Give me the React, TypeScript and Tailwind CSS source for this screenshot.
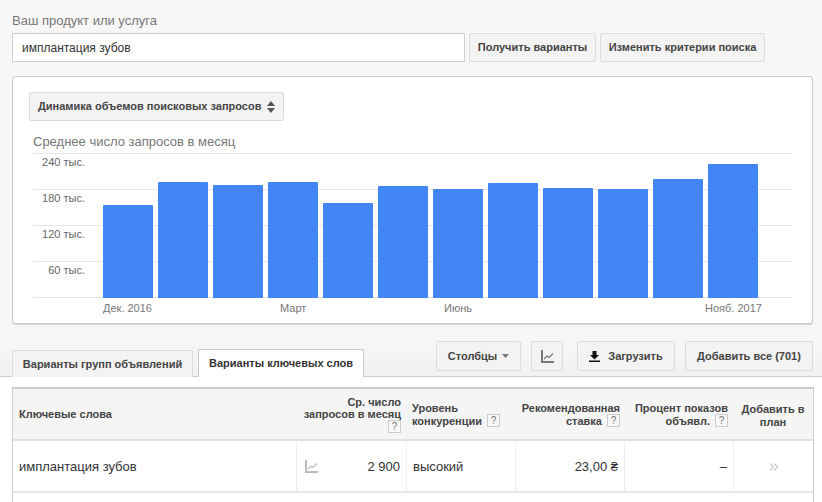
import { ChevronsRight } from "lucide-react";

const bars = [93, 116, 113, 116, 95, 112, 109, 115, 110, 109, 119, 134];

const yTicks = ["240 тыс.", "180 тыс.", "120 тыс.", "60 тыс."];

const font = { fontFamily: '"Liberation Sans", Arial, sans-serif' };

const Help = () => (
  <span className="inline-flex h-[13px] w-[13px] items-center justify-center border border-[#ccc] bg-[#f8f8f8] text-[10px] font-normal leading-none text-[#777]">
    ?
  </span>
);

const ChartIcon = ({ color = "#777" }: { color?: string }) => (
  <svg width="13" height="13" viewBox="0 0 13 13" fill="none">
    <path d="M1 0v12h12" stroke={color} strokeWidth="2" />
    <path d="M3 9l3-3 2 1.500 4-4" stroke={color} strokeWidth="1.200" />
  </svg>
);

const Button = ({ className, children }: { className: string; children: React.ReactNode }) => (
  <div
    className={`flex items-center justify-center rounded-[2px] border border-[#dcdcdc] bg-[#f3f3f3] text-[11px] font-bold text-[#444] ${className}`}
  >
    {children}
  </div>
);

const App = () => {
  return (
    <div className="h-[502px] w-[822px] overflow-hidden bg-[#f7f7f7]" style={font}>
      {/* Search */}
      <div className="px-3 pt-[13px]">
        <div className="h-5 text-[13px] leading-[15px] text-[#777]">Ваш продукт или услуга</div>
        <div className="flex h-[29px] gap-1">
          <div className="flex w-[453px] items-center border border-[#cfcfcf] bg-white pl-[9px] text-[12px] text-[#333]">
            имплантация зубов
          </div>
          <Button className="w-[127px]">Получить варианты</Button>
          <Button className="w-[165px]">Изменить критерии поиска</Button>
        </div>
      </div>

      {/* Chart card */}
      <div className="mx-3 mt-[14px] h-[248px] w-[801px] rounded-[3px] border border-[#c8c8c8] bg-white pl-4 pt-[15px] shadow-[0_1px_1px_rgba(0,0,0,0.12)]">
        <div className="flex h-[29px] w-[255px] items-center rounded-[2px] border border-[#dcdcdc] bg-[#f3f3f3] pl-2 text-[11px] font-bold text-[#444]">
          Динамика объемов поисковых запросов
          <svg className="ml-1.5" width="8" height="12" viewBox="0 0 8 12" fill="#555">
            <path d="M4 0l4 5H0zM0 7h8l-4 5z" />
          </svg>
        </div>
        <div className="mt-[13px] pl-1 text-[13px] leading-[16px] text-[#777]">Среднее число запросов в месяц</div>
        <div className="relative ml-1 mt-[3px] w-[759px] border-b border-[#e6e6e6]">
          {yTicks.map((t) => (
            <div key={t} className="h-[36px] border-t border-[#e6e6e6] pr-[707px] pt-[2px] text-right text-[11px] leading-[13px] text-[#666]">
              {t}
            </div>
          ))}
          <div className="absolute bottom-[-1px] left-[70px] flex items-end gap-[5px]">
            {bars.map((h, i) => (
              <div key={i} className="w-[50px] rounded-t-[1px] bg-[#4285f4]" style={{ height: h }} />
            ))}
          </div>
        </div>
        <div className="relative ml-1 mt-[4px] h-[13px] text-[11px] leading-[13px] text-[#777]">
          <span className="absolute left-[70px]">Дек. 2016</span>
          <span className="absolute left-[247px]">Март</span>
          <span className="absolute left-[411px]">Июнь</span>
          <span className="absolute left-[672px]">Нояб. 2017</span>
        </div>
      </div>

      {/* Tabs and actions */}
      <div className="mt-[17px] flex h-[36px] border-b border-[#ccc] bg-gradient-to-b from-[#f7f7f7] to-[#f1f1f1] pl-3 pr-[9px]">
        <div className="mt-[9px] flex h-[27px] w-[181px] items-center justify-center border border-b-0 border-[#dcdcdc] bg-[#f3f3f3] text-[11px] font-bold text-[#444]">
          Варианты групп объявлений
        </div>
        <div className="relative z-10 ml-[5px] mt-[8px] flex h-[28px] w-[166px] items-center justify-center border border-b-0 border-[#ccc] bg-white text-[11px] font-bold text-[#333]">
          Варианты ключевых слов
        </div>
        <div className="ml-auto flex">
          <Button className="h-[30px] w-[85px] gap-[5px]">
            Столбцы
            <svg width="7" height="4" viewBox="0 0 7 4" fill="#777">
              <path d="M0 0h7L3.500 4z" />
            </svg>
          </Button>
          <Button className="ml-[10px] h-[30px] w-[32px]">
            <ChartIcon />
          </Button>
          <Button className="ml-[14px] h-[30px] w-[98px] gap-[8px]">
            <svg width="11" height="11" viewBox="0 0 11 11" fill="#111">
              <path d="M3.500 0h4v4H10L5.500 8.500 1 4h2.500zM0 9.500h11V11H0z" />
            </svg>
            Загрузить
          </Button>
          <Button className="ml-[10px] h-[30px] w-[128px]">Добавить все (701)</Button>
        </div>
      </div>

      {/* Table */}
      <div className="h-[125px] bg-white pl-3 pt-[10px]">
        <div className="h-[115px] w-[802px] border-x border-t-2 border-[#ccc]">
          <div className="flex h-[52px] border-b-2 border-[#e0e0e0] bg-[#f5f5f5] text-[11px] font-bold leading-[12px] text-[#444]">
            <div className="flex w-[283px] items-center pl-[6px]">Ключевые слова</div>
            <div className="flex w-[110px] flex-col items-end justify-center pr-[5px] pt-[1px] text-right">
              <div>Ср. число</div>
              <div>запросов в месяц</div>
              <Help />
            </div>
            <div className="flex w-[109px] flex-col justify-center pl-[6px] pt-[1px]">
              <div>Уровень</div>
              <div className="flex items-center gap-[5px]">конкуренции <Help /></div>
            </div>
            <div className="flex w-[109px] flex-col items-end justify-center pr-[4px] pt-[1px] text-right">
              <div>Рекомендованная</div>
              <div className="flex items-center gap-[5px]">ставка <Help /></div>
            </div>
            <div className="flex w-[109px] flex-col items-end justify-center pr-[5px] pt-[1px] text-right">
              <div>Процент показов</div>
              <div className="flex items-center gap-[5px]">объявл. <Help /></div>
            </div>
            <div className="flex flex-1 items-center justify-center px-2 pt-[3px] text-center leading-[13px]">Добавить в план</div>
          </div>
          <div className="flex h-[52px] border-b-2 border-[#e6e6e6] pt-[1px] text-[13px] text-[#333]">
            <div className="flex w-[283px] items-center pl-[6px]">имплантация зубов</div>
            <div className="flex w-[110px] items-center justify-between border-l border-[#eee] pl-2 pr-[6px]">
              <ChartIcon color="#bbb" />
              <span>2 900</span>
            </div>
            <div className="flex w-[109px] items-center border-l border-[#eee] pl-[6px]">высокий</div>
            <div className="flex w-[109px] items-center justify-end border-l border-[#eee] pr-[6px]">23,00 ₴</div>
            <div className="flex w-[109px] items-center justify-end border-l border-[#eee] pr-[6px]">–</div>
            <div className="flex flex-1 items-center justify-center border-l border-[#eee] text-[#c5cfc5]">
              <ChevronsRight size={14} strokeWidth={2.5} />
            </div>
          </div>
        </div>
      </div>
    </div>
  );
};

export default App;
